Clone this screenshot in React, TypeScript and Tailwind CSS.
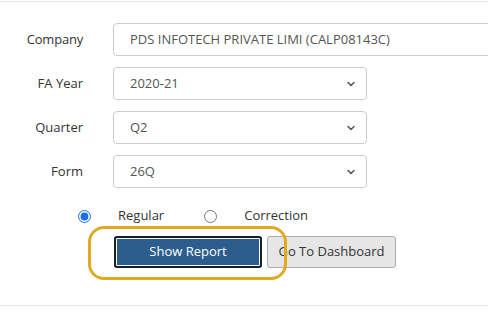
import { ChevronDown } from "lucide-react";

const rows = [
  { label: "FA Year", value: "2020-21" },
  { label: "Quarter", value: "Q2" },
  { label: "Form", value: "26Q" },
];

function Select({ value }: { value: string }) {
  return (
    <div className="w-[254px] h-[33px] border border-[#ccc] rounded-[4px] flex items-center justify-between pl-[16px] pr-[9px] text-[#555]">
      <span>{value}</span>
      <ChevronDown size={12} strokeWidth={3} className="text-[#555]" />
    </div>
  );
}

export default function App() {
  return (
    <div className="w-[488px] h-[334px] bg-white overflow-hidden font-['Open_Sans',sans-serif] text-[13px] text-[#333]">
      <div className="mt-px border-t border-[#e3e3e3] pt-[21px]">
        <div className="flex flex-col gap-[11px]">
          <div className="flex items-center h-[33px]">
            <label className="w-[83px] shrink-0 text-right tracking-[-0.2px]">Company</label>
            <div className="ml-[30px] w-[400px] shrink-0 h-[33px] border border-[#ccc] rounded-[4px] flex items-center pl-[16px] text-[#555] whitespace-nowrap">
              PDS INFOTECH PRIVATE LIMI (CALP08143C)
            </div>
          </div>
          {rows.map((r) => (
            <div key={r.label} className="flex items-center h-[33px]">
              <label className="w-[83px] shrink-0 text-right">{r.label}</label>
              <div className="ml-[30px]">
                <Select value={r.value} />
              </div>
            </div>
          ))}
        </div>

        <div className="mt-[18px] h-[20px] flex items-center">
          <input type="radio" name="t" defaultChecked className="ml-[78px] w-[13px] h-[13px] m-0 accent-[#1a6ff0]" />
          <span className="ml-[27px]">Regular</span>
          <input type="radio" name="t" className="ml-[40px] w-[13px] h-[13px] m-0" />
          <span className="ml-[27px]">Correction</span>
        </div>

        <div className="mt-[10px] ml-[114px] flex gap-[5px] relative">
          <div className="absolute left-[-26px] top-[-10px] w-[199px] h-[54px] rounded-[16px] border-[3px] border-[#e2a91e] pointer-events-none" />
          <button className="w-[148px] h-[32px] rounded-[3px] border-2 border-[#14202c] bg-[#2b5d8d] text-white shadow-[inset_0_0_0_1px_#fff]">
            Show Report
          </button>
          <button className="w-[129px] h-[32px] rounded-[3px] border border-[#adadad] bg-[#e6e6e6] text-[#333]">
            Go To Dashboard
          </button>
        </div>

        <div className="mt-[37px] border-t border-[#e3e3e3]" />
      </div>
    </div>
  );
}
